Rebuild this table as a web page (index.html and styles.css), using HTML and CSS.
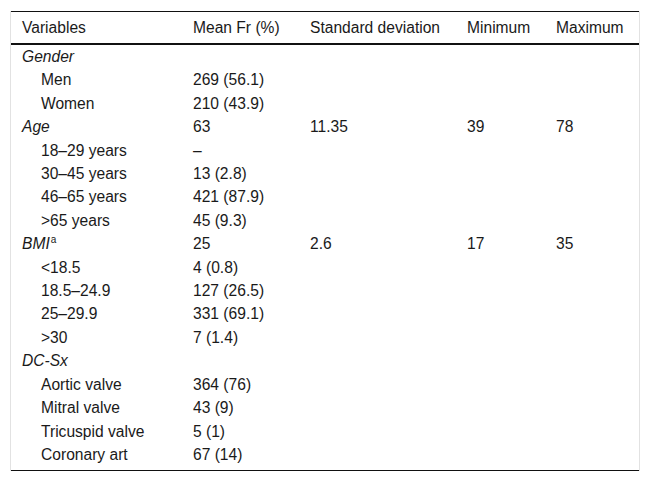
FILE: index.html
```html
<!DOCTYPE html>
<html lang="en">
<head>
<meta charset="utf-8">
<title>Table</title>
<link rel="stylesheet" href="styles.css">
</head>
<body>
<div class="frame">
<table class="data">
<colgroup>
<col class="c1"><col class="c2"><col class="c3"><col class="c4"><col class="c5">
</colgroup>
<thead>
<tr><th>Variables</th><th>Mean Fr (%)</th><th>Standard deviation</th><th>Minimum</th><th>Maximum</th></tr>
</thead>
<tbody>
<tr><td class="grp">Gender</td><td></td><td></td><td></td><td></td></tr>
<tr><td class="sub">Men</td><td>269 (56.1)</td><td></td><td></td><td></td></tr>
<tr><td class="sub">Women</td><td>210 (43.9)</td><td></td><td></td><td></td></tr>
<tr><td class="grp">Age</td><td>63</td><td>11.35</td><td>39</td><td>78</td></tr>
<tr><td class="sub">18–29 years</td><td>–</td><td></td><td></td><td></td></tr>
<tr><td class="sub">30–45 years</td><td>13 (2.8)</td><td></td><td></td><td></td></tr>
<tr><td class="sub">46–65 years</td><td>421 (87.9)</td><td></td><td></td><td></td></tr>
<tr><td class="sub">&gt;65 years</td><td>45 (9.3)</td><td></td><td></td><td></td></tr>
<tr><td class="grp">BMI<sup class="note">a</sup></td><td>25</td><td>2.6</td><td>17</td><td>35</td></tr>
<tr><td class="sub">&lt;18.5</td><td>4 (0.8)</td><td></td><td></td><td></td></tr>
<tr><td class="sub">18.5–24.9</td><td>127 (26.5)</td><td></td><td></td><td></td></tr>
<tr><td class="sub">25–29.9</td><td>331 (69.1)</td><td></td><td></td><td></td></tr>
<tr><td class="sub">&gt;30</td><td>7 (1.4)</td><td></td><td></td><td></td></tr>
<tr><td class="grp">DC-Sx</td><td></td><td></td><td></td><td></td></tr>
<tr><td class="sub">Aortic valve</td><td>364 (76)</td><td></td><td></td><td></td></tr>
<tr><td class="sub">Mitral valve</td><td>43 (9)</td><td></td><td></td><td></td></tr>
<tr><td class="sub">Tricuspid valve</td><td>5 (1)</td><td></td><td></td><td></td></tr>
<tr class="last"><td class="sub">Coronary art</td><td>67 (14)</td><td></td><td></td><td></td></tr>
</tbody>
</table>
</div>
</body>
</html>
```
FILE: styles.css
```css
html, body {
  margin: 0;
  padding: 0;
  background: #fff;
}

body {
  font-family: "Liberation Sans", Arial, sans-serif;
  font-size: 15.6px;
  color: #1a1a1a;
}

.frame {
  margin: 11px 0 0 10px;
  width: 628px;
  border-left: 1px solid #e2e2e2;
  border-right: 1px solid #e2e2e2;
}

.data {
  width: 628px;
  border-collapse: collapse;
  table-layout: fixed;
  border-top: 1px solid #111;
  border-bottom: 1px solid #111;
}

.c1 { width: 171px; }
.c2 { width: 117px; }
.c3 { width: 157px; }
.c4 { width: 89px; }
.c5 { width: 94px; }

.data th {
  font-weight: normal;
  text-align: left;
  line-height: 23px;
  padding: 4px 2px 4px 11px;
  border-bottom: 2px solid #111;
  white-space: nowrap;
}

.data td {
  line-height: 23.4px;
  padding: 0 2px 0 11px;
  white-space: nowrap;
  vertical-align: top;
}

.data tr.last td {
  padding-bottom: 4px;
}

.data td.grp {
  font-style: italic;
}

.data td.sub {
  padding-left: 30px;
}

.note {
  font-size: 10px;
  font-style: normal;
  line-height: 0;
  vertical-align: 6px;
  margin-left: 1px;
}
```
